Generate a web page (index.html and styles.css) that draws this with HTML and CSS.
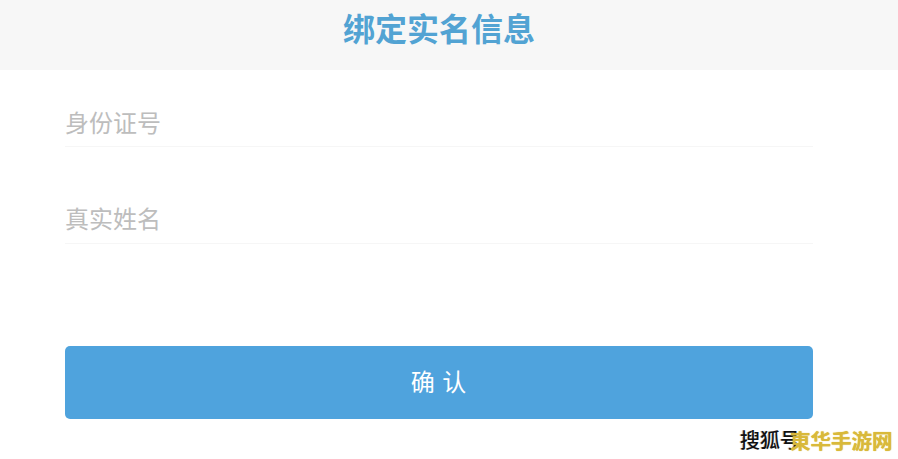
FILE: index.html
```html
<!DOCTYPE html>
<html lang="zh-CN">
<head>
  <meta charset="UTF-8">
  <meta name="viewport" content="width=device-width, initial-scale=1">
  <title>绑定实名信息</title>
  <link rel="stylesheet" href="styles.css">
</head>
<body>

  <!-- HEADER -->
  <div class="header">
    <h1>绑定实名信息</h1>
  </div>

  <!-- FORM -->
  <div class="form">
    <div class="field">身份证号</div>
    <div class="field">真实姓名</div>
    <button class="confirm-btn">确 认</button>
  </div>

  <!-- WATERMARK -->
  <div class="mark-sohu">搜狐号</div>
  <div class="mark-site">東华手游网</div>

</body>
</html>
```

FILE: styles.css
```css
* {
  margin: 0;
  padding: 0;
  box-sizing: border-box;
}
body {
  font-family: "Noto Sans CJK SC", "Liberation Sans", sans-serif;
  height: 459px;
  overflow: hidden;
  position: relative;
  background: #fff;
}
.header {
  height: 70px;
  background: #f7f7f7;
  display: flex;
  justify-content: center;
  padding-right: 20px;
}
.header h1 {
  font-size: 32px;
  line-height: 54px;
  font-weight: 700;
  color: #52a3d3;
}
.form {
  padding: 0 85px 0 65px;
}
.field {
  height: 77px;
  padding-top: 32px;
  font-size: 24px;
  line-height: 40px;
  color: #bdbdbd;
  border-bottom: 1px solid #f6f6f6;
}
.field + .field {
  height: 97px;
  padding-top: 51px;
}
.confirm-btn {
  display: block;
  width: 100%;
  height: 73px;
  margin-top: 102px;
  padding-bottom: 5px;
  border: none;
  border-radius: 5px;
  background: #4fa3dd;
  color: #fff;
  font-family: inherit;
  font-size: 24px;
  letter-spacing: 1px;
}
.mark-sohu {
  position: absolute;
  left: 740px;
  top: 428px;
  font-size: 20px;
  line-height: 24px;
  font-weight: 500;
  color: #111;
  text-shadow: 1px 1px 0 #fff, -1px 0 0 #bbb;
}
.mark-site {
  position: absolute;
  left: 790px;
  top: 428px;
  font-size: 20.5px;
  line-height: 24px;
  font-weight: 700;
  color: #d9b93a;
  text-shadow: 0 0 1px #d9b93a;
}
```
